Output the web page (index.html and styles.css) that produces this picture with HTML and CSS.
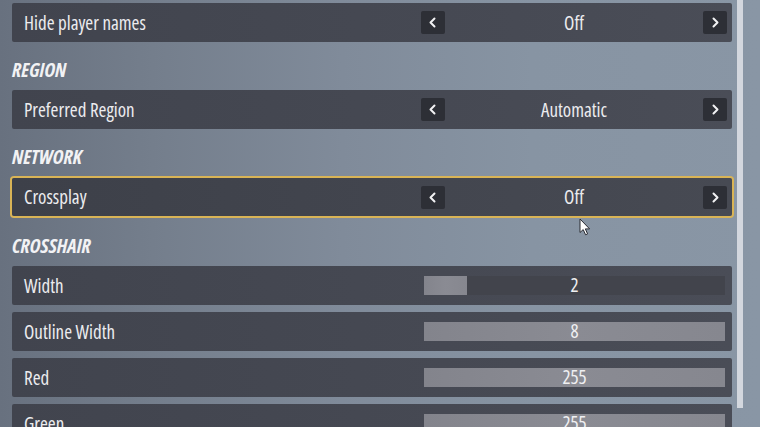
FILE: index.html
```html
<!DOCTYPE html>
<html lang="en">
<head>
<meta charset="utf-8">
<title>Settings</title>
<link rel="stylesheet" href="styles.css">
</head>
<body>
<div class="screen">
  <div class="list">
    <div class="row">
      <div class="label">Hide player names</div>
      <div class="control">
        <button class="arrow" aria-label="previous"><svg viewBox="0 0 24 23" width="24" height="23"><path d="M13.5 7.5 L9.5 11.5 L13.5 15.5" fill="none" stroke="#f2f2f4" stroke-width="2" stroke-linecap="round" stroke-linejoin="round"/></svg></button>
        <div class="value">Off</div>
        <button class="arrow" aria-label="next"><svg viewBox="0 0 24 23" width="24" height="23"><path d="M10.5 7.5 L14.5 11.5 L10.5 15.5" fill="none" stroke="#f2f2f4" stroke-width="2" stroke-linecap="round" stroke-linejoin="round"/></svg></button>
      </div>
    </div>

    <h2 class="heading">REGION</h2>
    <div class="row">
      <div class="label">Preferred Region</div>
      <div class="control">
        <button class="arrow" aria-label="previous"><svg viewBox="0 0 24 23" width="24" height="23"><path d="M13.5 7.5 L9.5 11.5 L13.5 15.5" fill="none" stroke="#f2f2f4" stroke-width="2" stroke-linecap="round" stroke-linejoin="round"/></svg></button>
        <div class="value">Automatic</div>
        <button class="arrow" aria-label="next"><svg viewBox="0 0 24 23" width="24" height="23"><path d="M10.5 7.5 L14.5 11.5 L10.5 15.5" fill="none" stroke="#f2f2f4" stroke-width="2" stroke-linecap="round" stroke-linejoin="round"/></svg></button>
      </div>
    </div>

    <h2 class="heading">NETWORK</h2>
    <div class="row focused">
      <div class="label">Crossplay</div>
      <div class="control">
        <button class="arrow" aria-label="previous"><svg viewBox="0 0 24 23" width="24" height="23"><path d="M13.5 7.5 L9.5 11.5 L13.5 15.5" fill="none" stroke="#f2f2f4" stroke-width="2" stroke-linecap="round" stroke-linejoin="round"/></svg></button>
        <div class="value">Off</div>
        <button class="arrow" aria-label="next"><svg viewBox="0 0 24 23" width="24" height="23"><path d="M10.5 7.5 L14.5 11.5 L10.5 15.5" fill="none" stroke="#f2f2f4" stroke-width="2" stroke-linecap="round" stroke-linejoin="round"/></svg></button>
      </div>
    </div>

    <h2 class="heading">CROSSHAIR</h2>
    <div class="row">
      <div class="label">Width</div>
      <div class="control">
        <div class="slider"><div class="fill" style="width:14.3%"></div><span class="num">2</span></div>
      </div>
    </div>
    <div class="row">
      <div class="label">Outline Width</div>
      <div class="control">
        <div class="slider"><div class="fill" style="width:100%"></div><span class="num">8</span></div>
      </div>
    </div>
    <div class="row">
      <div class="label">Red</div>
      <div class="control">
        <div class="slider"><div class="fill" style="width:100%"></div><span class="num">255</span></div>
      </div>
    </div>
    <div class="row">
      <div class="label">Green</div>
      <div class="control">
        <div class="slider"><div class="fill" style="width:100%"></div><span class="num">255</span></div>
      </div>
    </div>
  </div>
  <div class="scrollbar"><div class="thumb"></div></div>
  <svg class="cursor" viewBox="0 0 12 18" width="12" height="18"><path d="M1 1 L1 14.5 L4.2 11.6 L6.6 16.8 L8.6 15.9 L6.3 10.9 L10.6 10.9 Z" fill="#ffffff" stroke="#2a2c33" stroke-width="1" stroke-linejoin="round"/></svg>
</div>
</body>
</html>
```

FILE: styles.css
```css
html, body {
  margin: 0;
  padding: 0;
}

body {
  width: 760px;
  height: 427px;
  overflow: hidden;
  font-family: "Open Sans", "DejaVu Sans Condensed", sans-serif;
  font-stretch: 75%;
  color: #ececef;
}

.screen {
  position: relative;
  width: 760px;
  height: 427px;
  display: flex;
  background: linear-gradient(90deg, #68717f 0%, #747e8c 20%, #808b9a 45%, #8794a3 70%, #8996a5 100%);
  overflow: hidden;
}

.list {
  width: 720px;
  padding: 3px 0 0 12px;
  display: flex;
  flex-direction: column;
  gap: 7px;
}

.row {
  height: 39px;
  flex: 0 0 39px;
  display: flex;
  align-items: center;
  background: linear-gradient(90deg, #41444e 0%, #464953 60%, #4a4d57 100%);
  border-radius: 2px;
  box-sizing: border-box;
}

.row.focused {
  margin: 1px 0 2px 0;
  height: 38px;
  flex-basis: 38px;
  box-shadow: 0 0 0 2px #d9b456;
  background: linear-gradient(90deg, #3d4049 0%, #43464f 60%, #474a53 100%);
}

.label {
  flex: 1;
  padding-left: 12px;
  font-size: 19px;
}

.control {
  width: 311px;
  display: flex;
  align-items: center;
  padding-right: 5px;
  box-sizing: border-box;
}

.arrow {
  width: 24px;
  height: 23px;
  padding: 0;
  border: 0;
  border-radius: 2px;
  background: #2d2f36;
  display: flex;
  align-items: center;
  justify-content: center;
}

.arrow svg {
  display: block;
}

.value {
  flex: 1;
  text-align: center;
  font-size: 19px;
}

.slider {
  position: relative;
  margin-left: 3px;
  width: 301px;
  height: 19px;
  background: #42444c;
  display: flex;
  align-items: center;
  justify-content: center;
}

.slider .fill {
  position: absolute;
  left: 0;
  top: 0;
  bottom: 0;
  background: linear-gradient(90deg, #83848c 0%, #8a8b93 50%, #86878f 100%);
}

.slider .num {
  position: relative;
  font-size: 19px;
  line-height: 19px;
  color: #f0f0f2;
}

.heading {
  margin: 0;
  height: 35px;
  box-sizing: border-box;
  padding-top: 7px;
  line-height: 27px;
  font-size: 20px;
  font-weight: bold;
  font-style: italic;
  color: #f2f2f4;
}

.scrollbar {
  width: 6px;
  margin-left: 5px;
  height: 427px;
}

.thumb {
  width: 6px;
  height: 408px;
  background: #d3d7de;
}

.cursor {
  position: absolute;
  left: 579px;
  top: 218px;
}
```
